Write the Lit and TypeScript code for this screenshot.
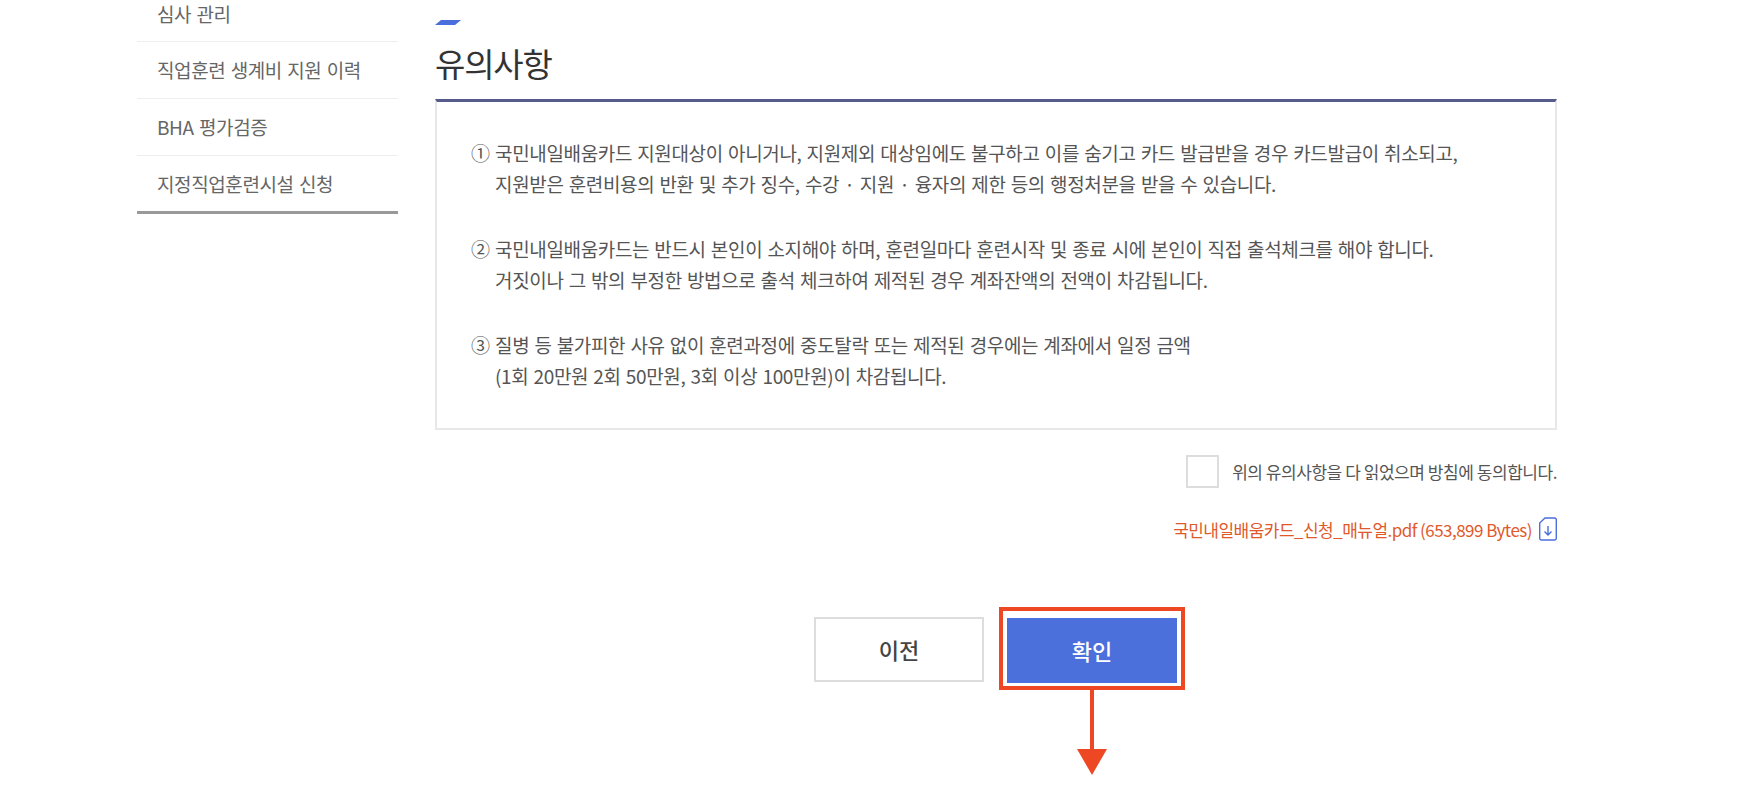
import { LitElement, html, css } from 'lit';
import { customElement } from 'lit/decorators.js';

const MENU = ['심사 관리', '직업훈련 생계비 지원 이력', 'BHA 평가검증', '지정직업훈련시설 신청'];

const NOTICES = [
  {
    mark: '①',
    lines: [
      '국민내일배움카드 지원대상이 아니거나, 지원제외 대상임에도 불구하고 이를 숨기고 카드 발급받을 경우 카드발급이 취소되고,',
      '지원받은 훈련비용의 반환 및 추가 징수, 수강 · 지원 · 융자의 제한 등의 행정처분을 받을 수 있습니다.',
    ],
  },
  {
    mark: '②',
    lines: [
      '국민내일배움카드는 반드시 본인이 소지해야 하며, 훈련일마다 훈련시작 및 종료 시에 본인이 직접 출석체크를 해야 합니다.',
      '거짓이나 그 밖의 부정한 방법으로 출석 체크하여 제적된 경우 계좌잔액의 전액이 차감됩니다.',
    ],
  },
  {
    mark: '③',
    lines: [
      '질병 등 불가피한 사유 없이 훈련과정에 중도탈락 또는 제적된 경우에는 계좌에서 일정 금액',
      '(1회 20만원 2회 50만원, 3회 이상 100만원)이 차감됩니다.',
    ],
  },
];

@customElement('app-root')
export class AppRoot extends LitElement {
  static override styles = css`
    :host {
      display: block;
      position: relative;
      width: 1746px;
      height: 798px;
      overflow: hidden;
      background: #fff;
      font-family: 'Noto Sans CJK KR', 'Noto Sans', sans-serif;
      color: #555;
    }

    .page {
      display: flex;
      padding-left: 137px;
    }

    /* 왼쪽 메뉴 */
    .side {
      width: 261px;
      flex: none;
      border-bottom: 3px solid #999;
      height: 214px;
      box-sizing: border-box;
    }
    .side div {
      height: 57px;
      box-sizing: border-box;
      padding-top: 14px;
      border-bottom: 1px solid #eee;
      font-size: 19px;
      line-height: 28px;
      letter-spacing: -0.4px;
      word-spacing: 1.5px;
      padding-left: 20px;
      color: #666;
    }
    .side div:first-child {
      height: 42px;
      padding-top: 0;
    }
    .side div:last-child {
      border-bottom: 0;
    }

    .main {
      width: 1122px;
      margin-left: 37px;
      flex: none;
    }
    .accent {
      width: 26px;
      height: 5px;
      margin-top: 20px;
      background: #4a6fdc;
      clip-path: polygon(6px 0, 100% 0, 20px 100%, 0 100%);
    }
    h2 {
      margin: 14px 0 0;
      font-size: 33px;
      line-height: 48px;
      font-weight: 400;
      letter-spacing: -1.2px;
      color: #333;
      height: 60px;
    }

    .box {
      height: 331px;
      box-sizing: border-box;
      border: 2px solid #e8e8e8;
      border-top: 3px solid #555b8a;
      padding: 36px 0 0 34px;
      font-size: 19px;
      line-height: 30.5px;
      letter-spacing: -0.35px;
      word-spacing: 1.25px;
    }
    .notice {
      display: flex;
      margin-bottom: 35px;
    }
    .mark {
      width: 24px;
      flex: none;
    }

    .agree {
      display: flex;
      justify-content: flex-end;
      align-items: center;
      gap: 13px;
      margin-top: 25px;
      font-size: 17px;
      letter-spacing: -0.45px;
    }
    .check {
      width: 33px;
      height: 33px;
      box-sizing: border-box;
      border: 2px solid #ddd;
    }

    .file {
      display: flex;
      justify-content: flex-end;
      align-items: center;
      gap: 7px;
      margin-top: 28px;
      height: 26px;
      font-size: 17px;
      letter-spacing: -0.53px;
      color: #e0592a;
    }

    .btns {
      display: flex;
      gap: 23px;
      margin-top: 75px;
      padding-left: 379px;
    }
    .btn {
      width: 170px;
      height: 65px;
      box-sizing: border-box;
      display: flex;
      align-items: center;
      justify-content: center;
      font-size: 22px;
      font-weight: 500;
      padding-bottom: 2px;
      border: 2px solid #ddd;
      background: #fff;
      color: #444;
    }
    .btn.ok {
      background: #4b6fdb;
      border-color: #4b6fdb;
      color: #fff;
      margin-top: 1px;
    }

    /* 빨간 강조 표시 */
    .mark-box {
      position: absolute;
      left: 999px;
      top: 607px;
      width: 186px;
      height: 83px;
      box-sizing: border-box;
      border: 4px solid #ee4723;
    }
    .mark-arrow {
      position: absolute;
      left: 1075px;
      top: 690px;
    }
  `;

  override render() {
    return html`
      <div class="page">
        <div class="side">${MENU.map(m => html`<div>${m}</div>`)}</div>
        <div class="main">
          <div class="accent"></div>
          <h2>유의사항</h2>
          <div class="box">
            ${NOTICES.map(n => html`
              <div class="notice">
                <span class="mark">${n.mark}</span>
                <div>${n.lines.map(l => html`<div>${l}</div>`)}</div>
              </div>
            `)}
          </div>
          <div class="agree">
            <span class="check"></span>
            <span>위의 유의사항을 다 읽었으며 방침에 동의합니다.</span>
          </div>
          <div class="file">
            <span>국민내일배움카드_신청_매뉴얼.pdf (653,899 Bytes)</span>
            <svg width="18" height="24" viewBox="0 0 18 24" fill="none" stroke="#4b6fdb" stroke-width="1.4">
              <path d="M6 1h9.5a1.8 1.8 0 0 1 1.8 1.8v18.4a1.8 1.8 0 0 1-1.8 1.8h-13a1.8 1.8 0 0 1-1.8-1.8V6z" />
              <path d="M9 9v9M5.5 14.5 9 18l3.5-3.5" />
            </svg>
          </div>
          <div class="btns">
            <div class="btn">이전</div>
            <div class="btn ok">확인</div>
          </div>
        </div>
      </div>
      <div class="mark-box"></div>
      <svg class="mark-arrow" width="34" height="86" viewBox="0 0 34 86">
        <rect x="15" y="0" width="4" height="60" fill="#ee4723" />
        <path d="M2 59h30L17 85z" fill="#ee4723" />
      </svg>
    `;
  }
}
